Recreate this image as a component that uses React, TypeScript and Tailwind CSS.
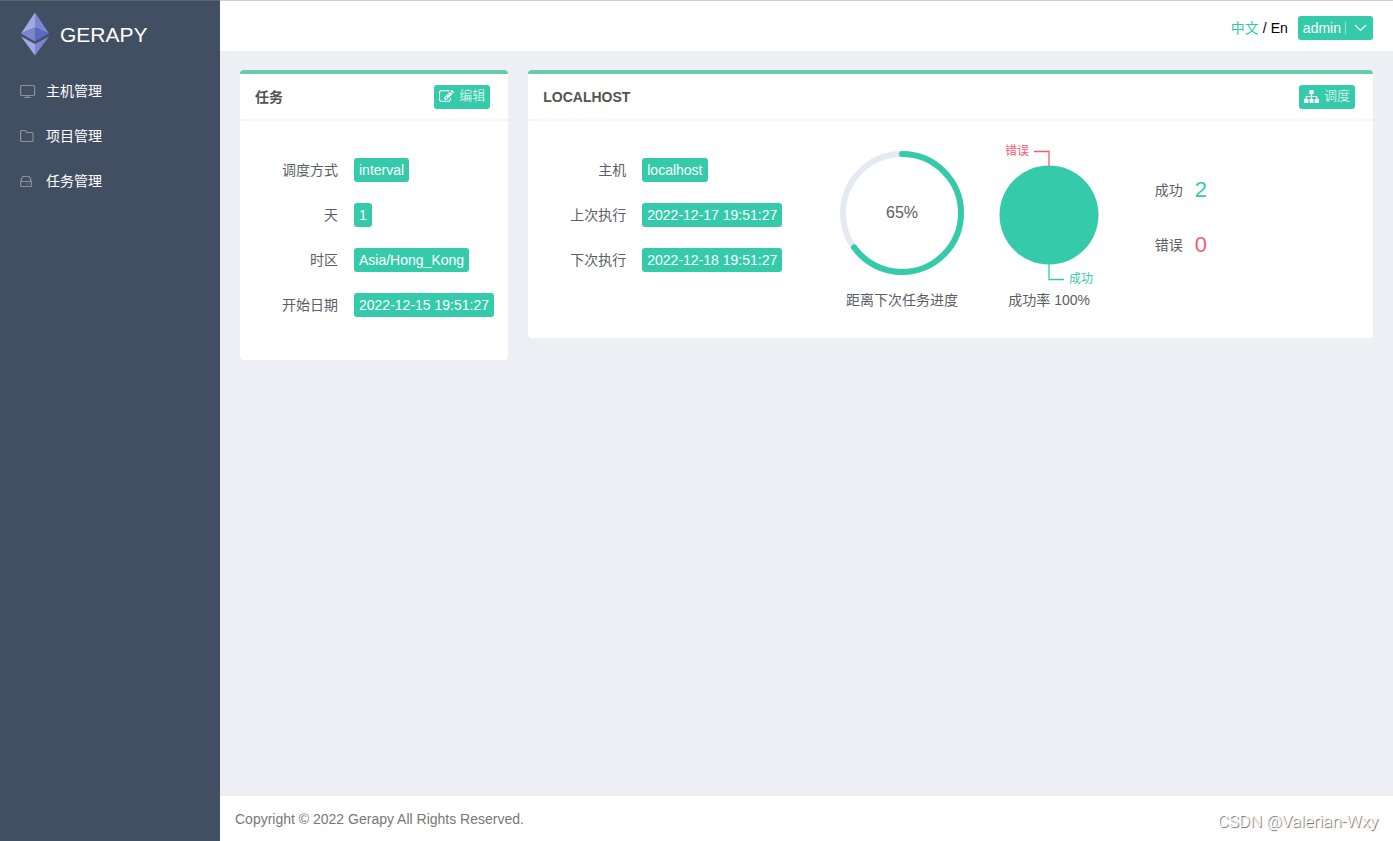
import type { ReactNode } from 'react';

const MENU = [
  { label: '主机管理', icon: <MonitorIcon /> },
  { label: '项目管理', icon: <FolderIcon /> },
  { label: '任务管理', icon: <DriveIcon /> },
];

const TASK = [
  { label: '调度方式', value: 'interval' },
  { label: '天', value: '1' },
  { label: '时区', value: 'Asia/Hong_Kong' },
  { label: '开始日期', value: '2022-12-15 19:51:27' },
];

const HOST = [
  { label: '主机', value: 'localhost' },
  { label: '上次执行', value: '2022-12-17 19:51:27' },
  { label: '下次执行', value: '2022-12-18 19:51:27' },
];

function Logo() {
  return (
    <svg className="w-7 h-11" viewBox="0 0 28 44" aria-hidden="true">
      <path d="M14 .5 0 21.5 14 15.5z" fill="#a2abe0" />
      <path d="M14 .5 28 21.5 14 15.5z" fill="#7b86d0" />
      <path d="M0 21.5 14 15.5V29.5z" fill="#7b86d0" />
      <path d="M28 21.5 14 15.5V29.5z" fill="#5c69c2" />
      <path d="M0 24.5 14 32V43.5z" fill="#a2abe0" />
      <path d="M28 24.5 14 32V43.5z" fill="#7b86d0" />
    </svg>
  );
}

function MonitorIcon() {
  return (
    <svg className="w-4 h-4" viewBox="0 0 16 16" fill="none" stroke="currentColor" strokeWidth="1.2" aria-hidden="true">
      <rect x=".6" y="2.500" width="14" height="10" rx="1" />
      <path d="M7.500 12.500v2M4 14.500h7" />
    </svg>
  );
}

function FolderIcon() {
  return (
    <svg className="w-4 h-4" viewBox="0 0 16 16" fill="none" stroke="currentColor" strokeWidth="1.2" aria-hidden="true">
      <path d="M.6 12.500V3.500q0-1 1-1H5L7 4.500h5q1 0 1 1v7q0 1-1 1H1.600q-1 0-1-1z" />
    </svg>
  );
}

function DriveIcon() {
  return (
    <svg className="w-4 h-4" viewBox="0 0 16 16" fill="none" stroke="currentColor" strokeWidth="1.2" aria-hidden="true">
      <path d="M.6 9 2.200 4.200Q2.500 3.500 3.300 3.500h5.400q.8 0 1.100.7L11.500 9" />
      <rect x=".6" y="8.500" width="11" height="5" rx="1" />
      <path d="M6.500 11h1M9 11h1" />
    </svg>
  );
}

function EditIcon() {
  return (
    <svg className="h-[15px] w-[15px]" viewBox="0 0 1792 1792" fill="currentColor" aria-hidden="true">
      <path d="M888 1184l116-116-152-152-116 116v56h96v96h56zm440-720q-16-16-33 1l-350 350q-17 17-1 33t33-1l350-350q17-17 1-33zm80 594v190q0 119-84.5 203.5t-203.5 84.5h-832q-119 0-203.5-84.5t-84.5-203.5v-832q0-119 84.5-203.5t203.5-84.5h832q63 0 117 25 15 7 18 23 3 17-9 29l-49 49q-14 14-32 8-23-6-45-6h-832q-66 0-113 47t-47 113v832q0 66 47 113t113 47h832q66 0 113-47t47-113v-126q0-13 9-22l64-64q15-15 35-7t20 29zm-96-738l288 288-672 672h-288v-288zm444 132l-92 92-288-288 92-92q28-28 68-28t68 28l152 152q28 28 28 68t-28 68z" />
    </svg>
  );
}

function SitemapIcon() {
  return (
    <svg className="h-[15px] w-[15px]" viewBox="0 0 1792 1792" fill="currentColor" aria-hidden="true">
      <path d="M1792 1248v320q0 40-28 68t-68 28h-320q-40 0-68-28t-28-68v-320q0-40 28-68t68-28h96v-192h-512v192h96q40 0 68 28t28 68v320q0 40-28 68t-68 28h-320q-40 0-68-28t-28-68v-320q0-40 28-68t68-28h96v-192h-512v192h96q40 0 68 28t28 68v320q0 40-28 68t-68 28h-320q-40 0-68-28t-28-68v-320q0-40 28-68t68-28h96v-192q0-52 38-90t90-38h512v-192h-96q-40 0-68-28t-28-68v-320q0-40 28-68t68-28h320q40 0 68 28t28 68v320q0 40-28 68t-68 28h-96v192h512q52 0 90 38t38 90v192h96q40 0 68 28t28 68z" />
    </svg>
  );
}

function Panel({ title, action, className, children }: { title: string; action: ReactNode; className: string; children: ReactNode }) {
  return (
    <section className={`rounded border-t-4 border-[#65cea7] bg-white ${className}`}>
      <header className="flex h-[47px] items-center justify-between border-b-2 border-dotted border-[#f1f1f1] pl-[15px] pr-[18px]">
        <h2 className="font-bold text-[#535351]">{title}</h2>
        {action}
      </header>
      {children}
    </section>
  );
}

function ActionButton({ icon, label }: { icon: ReactNode; label: string }) {
  return (
    <button className="flex h-6 items-center gap-[5px] rounded-[3px] bg-[#35cbaa] px-[5px] text-[13px] font-light text-white">
      {icon}
      {label}
    </button>
  );
}

function Fields({ items }: { items: { label: string; value: string }[] }) {
  return (
    <dl className="flex flex-col gap-[5px]">
      {items.map((item) => (
        <div key={item.label} className="flex h-10 items-center gap-4">
          <dt className="w-[98px] shrink-0 text-right">{item.label}</dt>
          <dd className="h-6 whitespace-nowrap rounded-[3px] bg-[#35cbaa] px-[5px] leading-6 text-white">{item.value}</dd>
        </div>
      ))}
    </dl>
  );
}

function Progress({ percent }: { percent: number }) {
  const length = 2 * Math.PI * 59;
  return (
    <div className="relative h-[126px] w-[126px]">
      <svg viewBox="0 0 126 126" fill="none" strokeWidth="6" aria-hidden="true">
        <circle cx="63" cy="63" r="59" stroke="#e5e9f2" />
        <circle
          cx="63"
          cy="63"
          r="59"
          stroke="#35cbaa"
          strokeLinecap="round"
          strokeDasharray={`${(length * percent) / 100} ${length}`}
          transform="rotate(-90 63 63)"
        />
      </svg>
      <span className="absolute inset-0 flex items-center justify-center text-base">{percent}%</span>
    </div>
  );
}

function Pie() {
  return (
    <svg className="h-[140px] w-[140px] overflow-visible text-xs" viewBox="0 0 140 140" fill="none">
      <path d="M55 1.500h15V17" stroke="#fa5a6e" strokeWidth="1.300" />
      <path d="M70 113v16.500h15" stroke="#35cbaa" strokeWidth="1.300" />
      <circle cx="70" cy="65" r="49.500" fill="#35cbaa" />
      <text x="26" y="5" fill="#fa5a6e">错误</text>
      <text x="90" y="133" fill="#35cbaa">成功</text>
    </svg>
  );
}

export default function App() {
  return (
    <div className="flex min-h-screen bg-[#eeeff4] font-['Liberation_Sans','Noto_Sans_CJK_SC',sans-serif] text-sm text-[#5a5e66]">
      <aside className="w-[220px] shrink-0 border-t border-[#5c6675] bg-[#424f63]">
        <div className="flex items-center gap-[11px] pl-[21px] pt-[11px]">
          <Logo />
          <span className="pt-[2px] text-[21px] leading-7 text-white">GERAPY</span>
        </div>
        <nav className="mt-3 flex flex-col">
          {MENU.map((item) => (
            <a key={item.label} href="#" className="flex h-[45px] items-center gap-[10px] pl-5 text-white">
              <span className="text-[#8b9099]">{item.icon}</span>
              {item.label}
            </a>
          ))}
        </nav>
      </aside>

      <div className="flex min-w-0 flex-1 flex-col">
        <header className="flex h-[51px] items-center justify-end gap-[10px] border-t border-[#cfcfcf] bg-white px-5 pt-[3px]">
          <div className="flex gap-1 text-black">
            <button className="text-[#35cbaa]">中文</button>
            <span>/</span>
            <button>En</button>
          </div>
          <button className="flex h-6 items-center rounded-[3px] bg-[#35cbaa] px-[5px] text-white">
            admin
            <span className="ml-1 h-3 w-px bg-white/50"></span>
            <svg className="ml-[7px] h-3 w-[15px]" viewBox="0 0 15 12" fill="none" stroke="currentColor" strokeWidth="1.200" aria-hidden="true">
              <path d="m2 3 5.500 5.500L13 3" />
            </svg>
          </button>
        </header>

        <main className="grid flex-1 grid-cols-4 items-start gap-5 px-5 pt-[19px]">
          <Panel title="任务" className="col-span-1" action={<ActionButton icon={<EditIcon />} label="编辑" />}>
            <div className="pb-[35px] pt-[29px]">
              <Fields items={TASK} />
            </div>
          </Panel>

          <Panel title="LOCALHOST" className="col-span-3" action={<ActionButton icon={<SitemapIcon />} label="调度" />}>
            <div className="grid grid-cols-[300fr_147fr_147fr_250fr] pb-7 pt-[29px]">
              <Fields items={HOST} />
              <div className="flex flex-col items-center justify-between">
                <Progress percent={65} />
                <p className="whitespace-nowrap">距离下次任务进度</p>
              </div>
              <div className="flex flex-col items-center">
                <Pie />
                <p className="whitespace-nowrap">成功率 100%</p>
              </div>
              <dl className="flex flex-col gap-[15px] pl-8 pt-5">
                <div className="flex h-10 items-center gap-3">
                  <dt>成功</dt>
                  <dd className="text-[22px] text-[#35cbaa]">2</dd>
                </div>
                <div className="flex h-10 items-center gap-3">
                  <dt>错误</dt>
                  <dd className="text-[22px] text-[#fa5a6e]">0</dd>
                </div>
              </dl>
            </div>
          </Panel>
        </main>

        <footer className="flex h-[45px] items-center justify-between bg-white px-[15px] text-[#7a7676]">
          <p>Copyright © 2022 Gerapy All Rights Reserved.</p>
          <p className="pt-[6px] font-[Roboto,sans-serif] text-[17px] font-light text-white [text-shadow:1px_1px_1px_#555]">CSDN @Valerian-Wxy</p>
        </footer>
      </div>
    </div>
  );
}
